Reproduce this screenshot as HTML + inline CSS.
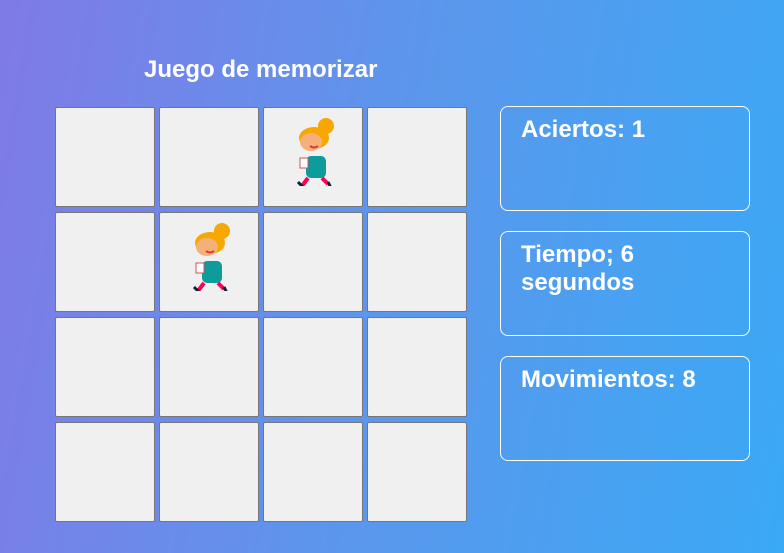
<!DOCTYPE html>
<html><head><style>
html,body{margin:0;padding:0}
body{width:784px;height:553px;overflow:hidden;background:linear-gradient(100deg,#807ae6 0%,#5b97ec 50%,#3aa9f6 100%);font-family:"Liberation Sans",sans-serif;position:relative}
h1{position:absolute;left:144px;top:56px;margin:0;font-size:24px;color:#fff;font-weight:bold}
.c{position:absolute;width:98px;height:98px;background:#f0f0f0;border:1px solid #777;border-radius:2px}
.b{position:absolute;left:500px;width:248px;height:103px;border:1px solid #fff;border-radius:8px;color:#fff;font-weight:bold;font-size:24px;line-height:28px;box-sizing:content-box}
.b span{position:absolute;left:20px;top:9px}
svg{position:absolute;left:20px;top:8px}
</style></head><body>
<h1>Juego de memorizar</h1>
<div class="c" style="left:55px;top:107px"></div>
<div class="c" style="left:159px;top:107px"></div>
<div class="c" style="left:263px;top:107px"><svg width="60" height="70" viewBox="0 0 60 70"><circle cx="42" cy="10" r="8" fill="#f6a800"/><ellipse cx="30" cy="22" rx="15" ry="11" fill="#f6a800"/><ellipse cx="27" cy="26" rx="11" ry="9" fill="#f5b07a"/><path d="M26 30q4 3 8 0" stroke="#d33" stroke-width="2" fill="none"/><rect x="22" y="40" width="20" height="22" rx="5" fill="#0d9b9b"/><rect x="16" y="42" width="8" height="10" fill="#fff" stroke="#c55"/><path d="M24 62l-6 8M38 62l6 6" stroke="#f05" stroke-width="4"/><path d="M14 66l5 5M44 66l3 6" stroke="#123" stroke-width="3"/></svg></div>
<div class="c" style="left:367px;top:107px"></div>
<div class="c" style="left:55px;top:212px"></div>
<div class="c" style="left:159px;top:212px"><svg width="60" height="70" viewBox="0 0 60 70"><circle cx="42" cy="10" r="8" fill="#f6a800"/><ellipse cx="30" cy="22" rx="15" ry="11" fill="#f6a800"/><ellipse cx="27" cy="26" rx="11" ry="9" fill="#f5b07a"/><path d="M26 30q4 3 8 0" stroke="#d33" stroke-width="2" fill="none"/><rect x="22" y="40" width="20" height="22" rx="5" fill="#0d9b9b"/><rect x="16" y="42" width="8" height="10" fill="#fff" stroke="#c55"/><path d="M24 62l-6 8M38 62l6 6" stroke="#f05" stroke-width="4"/><path d="M14 66l5 5M44 66l3 6" stroke="#123" stroke-width="3"/></svg></div>
<div class="c" style="left:263px;top:212px"></div>
<div class="c" style="left:367px;top:212px"></div>
<div class="c" style="left:55px;top:317px"></div>
<div class="c" style="left:159px;top:317px"></div>
<div class="c" style="left:263px;top:317px"></div>
<div class="c" style="left:367px;top:317px"></div>
<div class="c" style="left:55px;top:422px"></div>
<div class="c" style="left:159px;top:422px"></div>
<div class="c" style="left:263px;top:422px"></div>
<div class="c" style="left:367px;top:422px"></div>
<div class="b" style="top:106px"><span>Aciertos: 1</span></div>
<div class="b" style="top:231px"><span>Tiempo; 6<br>segundos</span></div>
<div class="b" style="top:356px"><span>Movimientos: 8</span></div>
</body></html>
